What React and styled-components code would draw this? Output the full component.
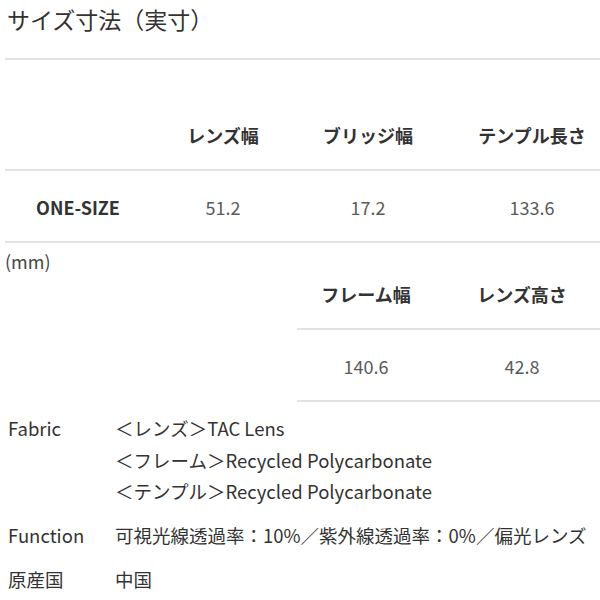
import React from 'react'
import styled, { createGlobalStyle } from 'styled-components'

const GlobalStyle = createGlobalStyle`
  body {
    margin: 0;
    background: #fff;
    overflow: hidden;
    font-family: "Noto Sans CJK JP", "Noto Sans", sans-serif;
    color: #333;
  }
`

const Page = styled.div`
  padding-left: 5px;
  width: 620px;
`

const TitleBar = styled.div`
  height: 60px;
  box-sizing: border-box;
  border-bottom: 2px solid #e2e2e2;
  width: 595px;
`

const Title = styled.h2`
  margin: 0;
  padding: 3px 0 0 2px;
  font-size: 23px;
  font-weight: 400;
  line-height: 33px;
  color: #333;
`

const Table = styled.div`
  display: grid;
  margin-top: ${p => p.$top || 0}px;
`

const Row = styled.div`
  display: grid;
  grid-template-columns: ${p => p.$cols};
  height: 72px;
  box-sizing: border-box;
  border-bottom: 2px solid #e2e2e2;
  align-items: center;
`

const Cell = styled.div`
  text-align: center;
  font-size: 18px;
  line-height: 24px;
  font-weight: ${p => (p.$bold ? 700 : 400)};
  color: ${p => (p.$bold ? '#333' : '#5a5a5a')};
  padding-top: 2px;
`

const UnitRow = styled.div`
  display: flex;
`

const Caption = styled.div`
  width: 292px;
  flex: none;
  padding-top: 6px;
  font-size: 18px;
  line-height: 24px;
  color: #444;
`

const SubTable = styled.div`
  padding-top: 15px;
  width: 312px;
`

const Specs = styled.div`
  display: grid;
  row-gap: 12.5px;
  margin-top: 11px;
  padding-left: 3px;
`

const Spec = styled.div`
  display: grid;
  grid-template-columns: 107px 1fr;
  font-size: 18.5px;
  line-height: 31.5px;
  color: #333;
`

const Lines = styled.div`
  display: flex;
  flex-direction: column;
  white-space: nowrap;
`

const mainCols = '146px 144px 146px 182px'
const subCols = '138px 174px'

export default function App() {
  return (
    <Page>
      <GlobalStyle />
      <TitleBar>
        <Title>サイズ寸法（実寸）</Title>
      </TitleBar>

      <Table $top={39}>
        <Row $cols={mainCols}>
          <Cell />
          <Cell $bold>レンズ幅</Cell>
          <Cell $bold>ブリッジ幅</Cell>
          <Cell $bold>テンプル長さ</Cell>
        </Row>
        <Row $cols={mainCols}>
          <Cell $bold>ONE-SIZE</Cell>
          <Cell>51.2</Cell>
          <Cell>17.2</Cell>
          <Cell>133.6</Cell>
        </Row>
      </Table>

      <UnitRow>
        <Caption>(mm)</Caption>
        <SubTable>
          <Row $cols={subCols}>
            <Cell $bold>フレーム幅</Cell>
            <Cell $bold>レンズ高さ</Cell>
          </Row>
          <Row $cols={subCols}>
            <Cell>140.6</Cell>
            <Cell>42.8</Cell>
          </Row>
        </SubTable>
      </UnitRow>

      <Specs>
        <Spec>
          <span>Fabric</span>
          <Lines>
            <span>＜レンズ＞TAC Lens</span>
            <span>＜フレーム＞Recycled Polycarbonate</span>
            <span>＜テンプル＞Recycled Polycarbonate</span>
          </Lines>
        </Spec>
        <Spec>
          <span>Function</span>
          <Lines>
            <span>可視光線透過率：10%／紫外線透過率：0%／偏光レンズ</span>
          </Lines>
        </Spec>
        <Spec>
          <span>原産国</span>
          <Lines>
            <span>中国</span>
          </Lines>
        </Spec>
      </Specs>
    </Page>
  )
}
